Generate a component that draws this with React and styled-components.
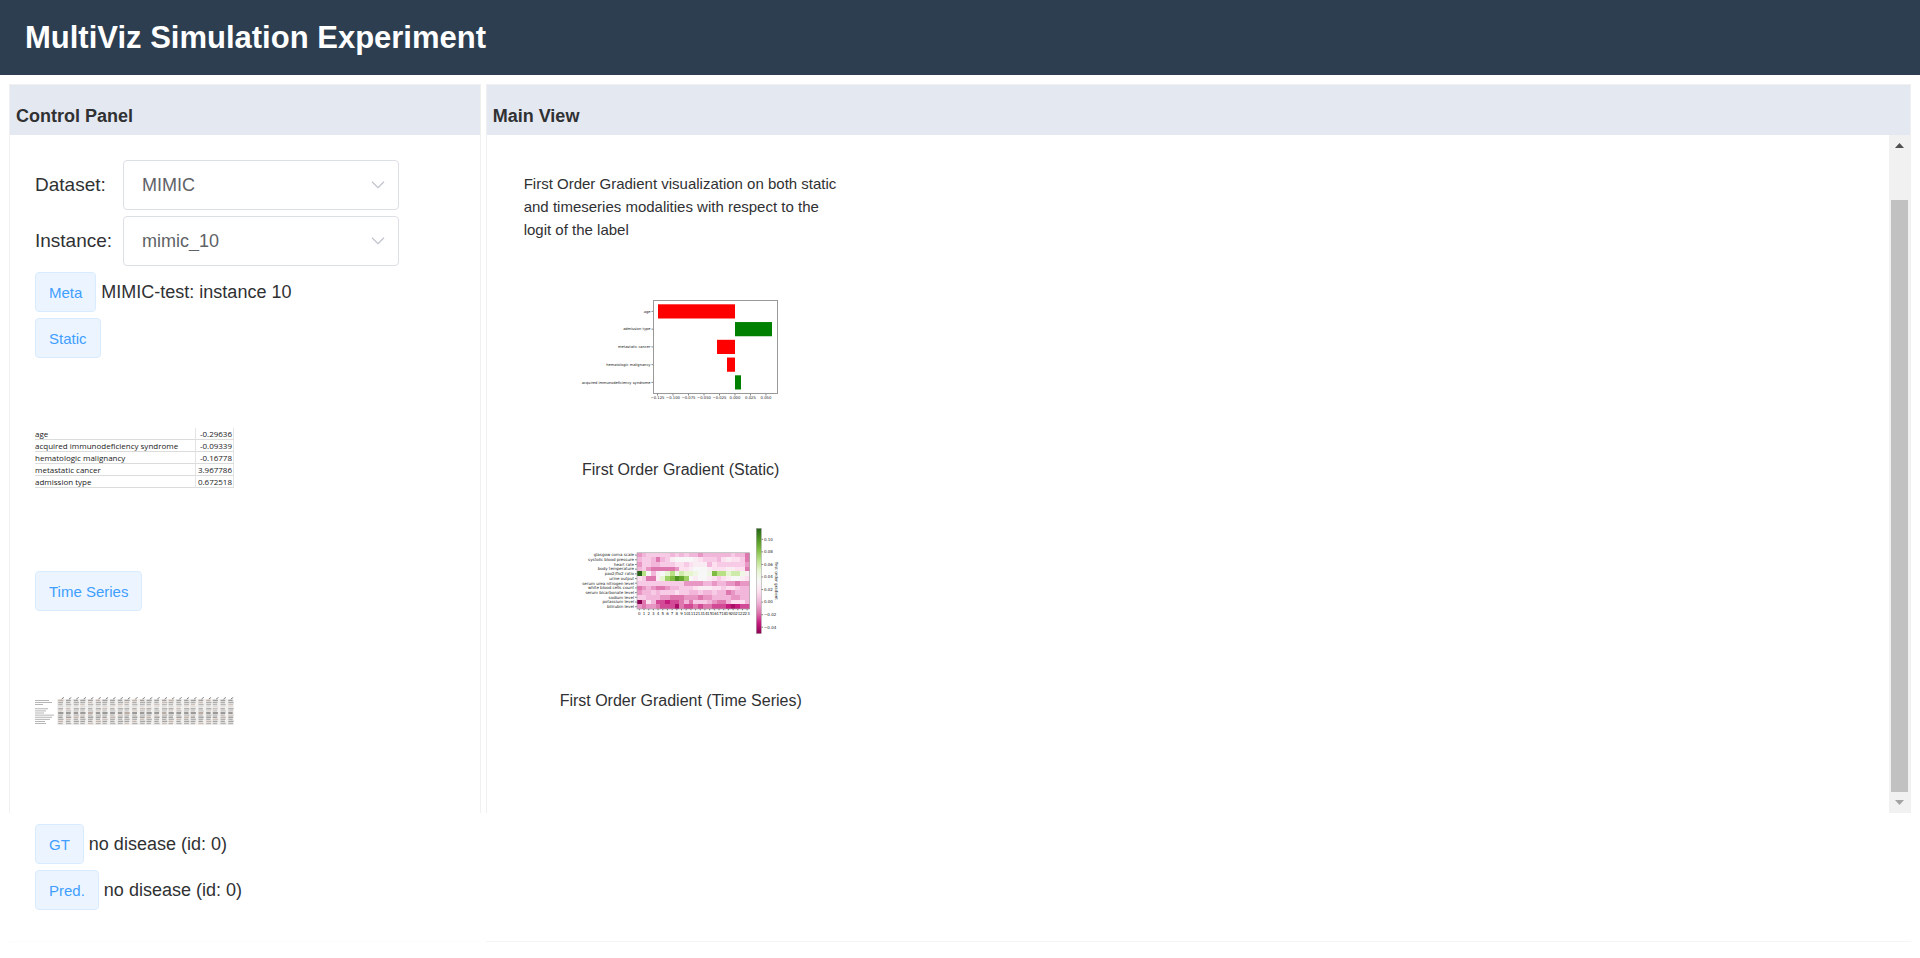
import React from "react";
import styled, { createGlobalStyle } from "styled-components";

const GlobalStyle = createGlobalStyle`
  body {
    margin: 0;
    background: #fff;
    color: #303133;
    font-family: "Liberation Sans", Arial, sans-serif;
    font-size: 18px;
  }

  * {
    box-sizing: border-box;
  }
`;

const Header = styled.header`
  display: flex;
  align-items: center;
  height: 75px;
  padding: 0 25px;
  background: #2c3e50;

  h1 {
    margin: 0;
    color: #fff;
    font-size: 31px;
    line-height: 36px;
  }
`;

const Workspace = styled.main`
  display: grid;
  grid-template-columns: 24.8% 1fr;
  column-gap: 5px;
  padding: 9px 9px 16px;
`;

const Panel = styled.section`
  display: flex;
  flex-direction: column;
  min-width: 0;
  border: 1px solid #f0f0f0;
  border-bottom: 0;
`;

const PanelTitle = styled.h2`
  margin: 0;
  padding: 20px 6px 8px;
  background: #e4e8f1;
  font-size: 18px;
  line-height: 22px;
`;

const PanelFooter = styled.section`
  padding: 11px 26px 31px;
  border-bottom: 1px solid ${(props) => (props.$faint ? "#fcfcfc" : "#f5f5f5")};
`;

const Controls = styled.div`
  display: flex;
  flex-direction: column;
  align-items: flex-start;
  padding: 25px 25px 2px;
`;

const Field = styled.div`
  display: grid;
  grid-template-columns: 88px 276px;
  align-items: center;
  margin-bottom: 6px;

  label {
    font-size: 19px;
  }
`;

const SelectWrap = styled.div`
  position: relative;

  select {
    width: 100%;
    height: 50px;
    padding: 0 40px 0 18px;
    appearance: none;
    border: 1px solid #dcdfe6;
    border-radius: 4px;
    background: #fff;
    color: #606266;
    font: inherit;
  }

  svg {
    position: absolute;
    top: 21px;
    right: 14px;
    pointer-events: none;
  }
`;

const Row = styled.div`
  display: flex;
  align-items: center;
  gap: 5px;
  height: 40px;
  margin-top: ${(props) => (props.$first ? "0" : "6px")};
`;

const Tag = styled.button`
  height: 40px;
  padding: 0 13px;
  border: 1px solid #d9ecff;
  border-radius: 4px;
  background: #ecf5ff;
  color: #409eff;
  font-family: inherit;
  font-size: 15px;
`;

const Preview = styled.div`
  display: flex;
  align-items: center;
  width: 199px;
  height: ${(props) => (props.$tall ? "207px" : "200px")};
  padding-bottom: ${(props) => (props.$tall ? "8px" : "0")};
`;

const StaticTable = styled.table`
  width: 100%;
  border-collapse: separate;
  border-spacing: 0;
  color: #222;
  font-family: "Open Sans", "Noto Sans", sans-serif;
  font-size: 8px;
  line-height: 11px;
  white-space: nowrap;

  th,
  td {
    height: 12px;
    padding: 0;
    border-bottom: 1px solid #dcdcdc;
    font-weight: 400;
    text-align: left;
  }

  td {
    width: 39px;
    padding-right: 1px;
    border-right: 1px solid #e4e4e4;
    border-left: 1px solid #e4e4e4;
    text-align: right;
  }
`;

const MainBody = styled.div`
  display: flex;
  flex: 1;
`;

const Views = styled.div`
  flex: 1;
  padding: 37px 37px 0;
`;

const View = styled.div`
  display: flex;
  flex-direction: column;
  align-items: center;
  width: 314px;
`;

const Description = styled.p`
  width: 100%;
  margin: 0 0 9px;
  font-size: 15px;
  line-height: 23px;
`;

const Figure = styled.figure`
  display: flex;
  flex-direction: column;
  align-items: center;
  margin: 0;

  svg {
    display: block;
  }

  figcaption {
    height: 31px;
    padding-top: 9px;
    font-size: 16px;
    line-height: 22px;
  }
`;

const Scrollbar = styled.div`
  display: flex;
  flex-direction: column;
  width: 21px;
  background: #f1f1f1;
`;

const ScrollButton = styled.button`
  display: flex;
  align-items: center;
  justify-content: center;
  height: 21px;
  padding: 0;
  border: 0;
  background: none;
`;

const ScrollTrack = styled.div`
  display: grid;
  flex: 1;
  grid-template-rows: 44fr 592fr;
  padding: 0 2px;
`;

const ScrollThumb = styled.div`
  grid-row: 2;
  background: #c1c1c1;
`;

const staticValues = [
  ["age", "-0.29636"],
  ["acquired immunodeficiency syndrome", "-0.09339"],
  ["hematologic malignancy", "-0.16778"],
  ["metastatic cancer", "3.967786"],
  ["admission type", "0.672518"],
];

const gradientBars = [
  { label: "age", x: 77, width: 77, color: "#f00" },
  { label: "admission type", x: 154, width: 37, color: "#008000" },
  { label: "metastatic cancer", x: 136, width: 18, color: "#f00" },
  { label: "hematologic malignancy", x: 146, width: 8, color: "#f00" },
  { label: "acquired immunodeficiency syndrome", x: 154, width: 6, color: "#008000" },
];

const barTicks = ["−0.125", "−0.100", "−0.075", "−0.050", "−0.025", "0.000", "0.025", "0.050"];

// one letter per hour, a = lowest gradient, u = highest
const heatRows = [
  ["glasgow coma scale", "fghhhhhghghggfgggggghgge"],
  ["systolic blood pressure", "ghhgeghjkkkkjihhhgijiihe"],
  ["heart rate", "fhhgghhhiihijjjgihhhhhhf"],
  ["body temperature", "ghfeeeeefiijkkkjiiijjiie"],
  ["pao2/fio2 ratio", "uokgjkmolnmmlkklqoomnnlj"],
  ["urine output", "iheejmpqsrpkjkkjihijkkji"],
  ["serum urea nitrogen level", "hhhhhhhhhhffffggfggffeff"],
  ["white blood cells count", "efgfeefgghhhijjjiihiihgg"],
  ["serum bicarbonate level", "fgghghhhihhgghgghggefggg"],
  ["sodium level", "hhgggffeeefffeffggggffgg"],
  ["potassium level", "aeigddcddegehhhgfeegiiig"],
  ["bilirubin level", "feffedddbeddedeedddcbcdd"],
];

const palette = [
  [142, 1, 82],
  [197, 27, 125],
  [222, 119, 174],
  [241, 182, 218],
  [253, 224, 239],
  [247, 247, 247],
  [230, 245, 208],
  [184, 225, 134],
  [127, 188, 65],
  [77, 146, 33],
  [39, 100, 25],
];

function cellColor(letter) {
  const value = (letter.charCodeAt(0) - 97) / 2;
  const low = palette[Math.floor(value)];
  const high = palette[Math.ceil(value)];
  return `rgb(${low.map((c, i) => Math.round((c + high[i]) / 2)).join(",")})`;
}

const colorTicks = ["0.10", "0.08", "0.06", "0.04", "0.02", "0.00", "−0.02", "−0.04"];

const labelFont = { fontFamily: '"DejaVu Sans", sans-serif', fill: "#222" };

function Chevron() {
  return (
    <svg width="14" height="8" viewBox="0 0 14 8" fill="none" stroke="#c0c4cc" strokeWidth="1.3">
      <path d="M1 0.7l6 6 6-6" />
    </svg>
  );
}

function SelectField({ id, label, value }) {
  return (
    <Field>
      <label htmlFor={id}>{label}</label>
      <SelectWrap>
        <select id={id} defaultValue={value}>
          <option>{value}</option>
        </select>
        <Chevron />
      </SelectWrap>
    </Field>
  );
}

function SeriesThumbnail() {
  const columns = Array.from({ length: 24 }, (_, i) => i);
  const rows = Array.from({ length: 12 }, (_, i) => i);
  const labels = [14, 17, 8, 0, 13, 11, 9, 19, 17, 15, 10, 11];
  const shades = [0.42, 0.36, 0.3, 0.1, 0.36, 0.22, 0.65, 0.28, 0.44, 0.34, 0.4, 0.32];
  return (
    <svg width="199" height="28" viewBox="0 0 199 28" role="img" aria-label="Time series values">
      <rect x="22" y="2" width="177" height="26" fill="#f3f1ef" />
      {rows.map((r) => (
        <g key={r} fill="#333">
          <rect x="0" y={3 + r * 2.1} width={labels[r]} height="0.8" opacity="0.45" />
          {columns.map((c) => (
            <rect
              key={c}
              x={23.2 + c * 7.36 + ((r * 3 + c) % 3) * 0.4}
              y={2.7 + r * 2.1}
              width={5.2 - ((r + c) % 3) * 0.4}
              height="1.4"
              fill={(r + c) % 5 === 0 ? "#7a5a48" : "#333"}
              opacity={shades[r]}
            />
          ))}
        </g>
      ))}
      {columns.map((c) => (
        <path key={c} d={`M${26.6 + c * 7.36} 2l2.4-1.6`} stroke="#777" strokeWidth="0.9" />
      ))}
    </svg>
  );
}

function StaticGradient() {
  return (
    <svg width="200" height="200" viewBox="0 0 200 200" role="img" aria-label="Static gradient">
      {gradientBars.map((bar, i) => (
        <g key={bar.label}>
          <rect x={bar.x} y={54.3 + i * 17.75} width={bar.width} height="14.2" fill={bar.color} />
          <path d={`M70.5 ${61.4 + i * 17.75}h1.5`} stroke="#333" strokeWidth="0.6" />
          <text x="69.5" y={62.7 + i * 17.75} textAnchor="end" fontSize="3.6" {...labelFont}>
            {bar.label}
          </text>
        </g>
      ))}
      <rect x="72.5" y="50.5" width="124" height="93" fill="none" stroke="#999" />
      {barTicks.map((tick, i) => (
        <g key={tick}>
          <path d={`M${76.5 + i * 15.5} 144v1.5`} stroke="#333" strokeWidth="0.6" />
          <text x={76.5 + i * 15.5} y="149" textAnchor="middle" fontSize="3.8" {...labelFont}>
            {tick}
          </text>
        </g>
      ))}
    </svg>
  );
}

function SeriesGradient() {
  const size = 4.69;
  return (
    <svg width="200" height="200" viewBox="0 0 200 200" role="img" aria-label="Time series gradient">
      <defs>
        <linearGradient id="scale" x1="0" y1="1" x2="0" y2="0">
          {palette.map((color, i) => (
            <stop key={i} offset={i / 10} stopColor={`rgb(${color.join(",")})`} />
          ))}
        </linearGradient>
      </defs>
      {heatRows.map(([label, cells], r) => (
        <g key={label}>
          <text x="53" y={75.4 + r * size} textAnchor="end" fontSize="4" {...labelFont}>
            {label}
          </text>
          <path d={`M54 ${74.1 + r * size}h2`} stroke="#333" strokeWidth="0.6" />
          {cells.split("").map((letter, c) => (
            <rect
              key={c}
              x={56 + c * size}
              y={71.7 + r * size}
              width={size}
              height={size}
              fill={cellColor(letter)}
              shapeRendering="crispEdges"
            />
          ))}
        </g>
      ))}
      <rect x="56" y="71.7" width="112.6" height="56.3" fill="none" stroke="#aaa" strokeWidth="0.7" />
      {Array.from({ length: 24 }, (_, i) => (
        <g key={i}>
          <path d={`M${58.3 + i * size} 128v1.3`} stroke="#333" strokeWidth="0.6" />
          <text x={58.3 + i * size} y="133.7" textAnchor="middle" fontSize="4" {...labelFont}>
            {i}
          </text>
        </g>
      ))}
      <rect x="175.3" y="47.4" width="5" height="105.2" fill="url(#scale)" stroke="#999" strokeWidth="0.5" />
      {colorTicks.map((tick, i) => (
        <g key={tick}>
          <path d={`M180.5 ${58.3 + i * 12.56}h1.6`} stroke="#333" strokeWidth="0.6" />
          <text x="183" y={59.6 + i * 12.56} fontSize="4" {...labelFont}>
            {tick}
          </text>
        </g>
      ))}
      <text transform="translate(194 100) rotate(90)" textAnchor="middle" fontSize="4" {...labelFont}>
        first order gradient
      </text>
    </svg>
  );
}

function ControlPanel() {
  return (
    <Panel>
      <PanelTitle>Control Panel</PanelTitle>
      <Controls>
        <SelectField id="dataset" label="Dataset:" value="MIMIC" />
        <SelectField id="instance" label="Instance:" value="mimic_10" />
        <Row $first>
          <Tag>Meta</Tag>
          <span>MIMIC-test: instance 10</span>
        </Row>
        <Row>
          <Tag>Static</Tag>
        </Row>
        <Preview $tall>
          <StaticTable>
            <tbody>
              {staticValues.map(([name, value]) => (
                <tr key={name}>
                  <th scope="row">{name}</th>
                  <td>{value}</td>
                </tr>
              ))}
            </tbody>
          </StaticTable>
        </Preview>
        <Row>
          <Tag>Time Series</Tag>
        </Row>
        <Preview>
          <SeriesThumbnail />
        </Preview>
      </Controls>
    </Panel>
  );
}

function MainView() {
  return (
    <Panel>
      <PanelTitle>Main View</PanelTitle>
      <MainBody>
        <Views>
          <View>
            <Description>
              First Order Gradient visualization on both static and timeseries modalities with
              respect to the logit of the label
            </Description>
            <Figure>
              <StaticGradient />
              <figcaption>First Order Gradient (Static)</figcaption>
            </Figure>
            <Figure>
              <SeriesGradient />
              <figcaption>First Order Gradient (Time Series)</figcaption>
            </Figure>
          </View>
        </Views>
        <Scrollbar>
          <ScrollButton aria-label="Scroll up">
            <svg width="9" height="5" viewBox="0 0 9 5" fill="#505050">
              <path d="M0 5h9L4.5 0z" />
            </svg>
          </ScrollButton>
          <ScrollTrack>
            <ScrollThumb />
          </ScrollTrack>
          <ScrollButton aria-label="Scroll down">
            <svg width="9" height="5" viewBox="0 0 9 5" fill="#a3a3a3">
              <path d="M0 0h9L4.5 5z" />
            </svg>
          </ScrollButton>
        </Scrollbar>
      </MainBody>
    </Panel>
  );
}

export default function App() {
  return (
    <>
      <GlobalStyle />
      <Header>
        <h1>MultiViz Simulation Experiment</h1>
      </Header>
      <Workspace>
        <ControlPanel />
        <MainView />
        <PanelFooter $faint>
          <Row $first>
            <Tag>GT</Tag>
            <span>no disease (id: 0)</span>
          </Row>
          <Row>
            <Tag>Pred.</Tag>
            <span>no disease (id: 0)</span>
          </Row>
        </PanelFooter>
        <PanelFooter />
      </Workspace>
    </>
  );
}
